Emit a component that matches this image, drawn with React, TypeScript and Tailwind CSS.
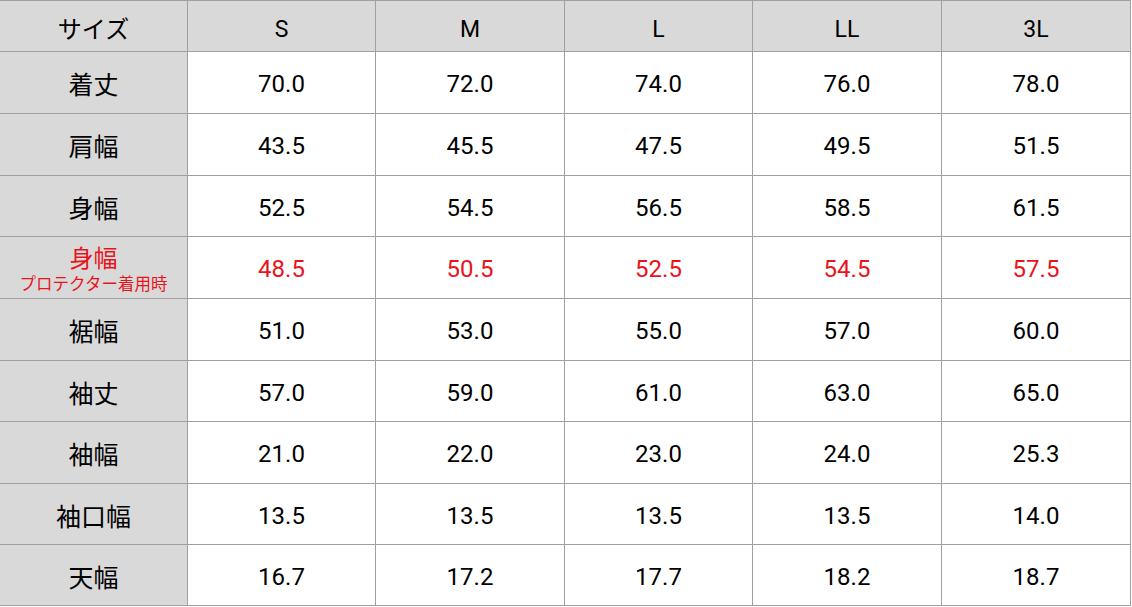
const sizes = ["S", "M", "L", "LL", "3L"];

type Row = { label: string; sub?: string; values: string[]; red?: boolean };

const rows: Row[] = [
  { label: "着丈", values: ["70.0", "72.0", "74.0", "76.0", "78.0"] },
  { label: "肩幅", values: ["43.5", "45.5", "47.5", "49.5", "51.5"] },
  { label: "身幅", values: ["52.5", "54.5", "56.5", "58.5", "61.5"] },
  { label: "身幅", sub: "プロテクター着用時", values: ["48.5", "50.5", "52.5", "54.5", "57.5"], red: true },
  { label: "裾幅", values: ["51.0", "53.0", "55.0", "57.0", "60.0"] },
  { label: "袖丈", values: ["57.0", "59.0", "61.0", "63.0", "65.0"] },
  { label: "袖幅", values: ["21.0", "22.0", "23.0", "24.0", "25.3"] },
  { label: "袖口幅", values: ["13.5", "13.5", "13.5", "13.5", "14.0"] },
  { label: "天幅", values: ["16.7", "17.2", "17.7", "18.2", "18.7"] },
];

const font = "font-['Roboto','Noto_Sans_CJK_JP',sans-serif]";

export default function App() {
  return (
    <div className="w-[1132px] h-[607px] bg-white">
      <div
        className={`${font} grid w-[1131px] grid-cols-[187px_187px_188px_187px_188px_188px] grid-rows-[50px_61px_61px_60px_61px_61px_60px_61px_60px_60px] gap-px bg-[#a0a0a0] pt-px pb-px pr-px text-black`}
      >
        <div className="flex items-center justify-center bg-[#d9d9d9] pt-[3px] text-[24px] font-['Noto_Sans_CJK_JP',sans-serif]">
          サイズ
        </div>
        {sizes.map((s) => (
          <div key={s} className="flex items-center justify-center bg-[#d9d9d9] pt-[8px] text-[23px]">
            {s}
          </div>
        ))}
        {rows.map((r, i) => (
          <>
            <div
              key={`l${i}`}
              className={`flex flex-col items-center justify-center bg-[#d9d9d9] font-['Noto_Sans_CJK_JP',sans-serif] ${
                r.red ? "text-[#e8141c]" : "pt-[2px]"
              }`}
            >
              <span className={r.sub ? "text-[24px] leading-[26px]" : "text-[25px] leading-none"}>{r.label}</span>
              {r.sub && <span className="mt-[4px] text-[16.5px] leading-[18px]">{r.sub}</span>}
            </div>
            {r.values.map((v, j) => (
              <div
                key={`v${i}-${j}`}
                className={`flex items-center justify-center bg-white pt-[3px] text-[24px] ${r.red ? "text-[#e8141c]" : ""}`}
              >
                {v}
              </div>
            ))}
          </>
        ))}
      </div>
    </div>
  );
}
